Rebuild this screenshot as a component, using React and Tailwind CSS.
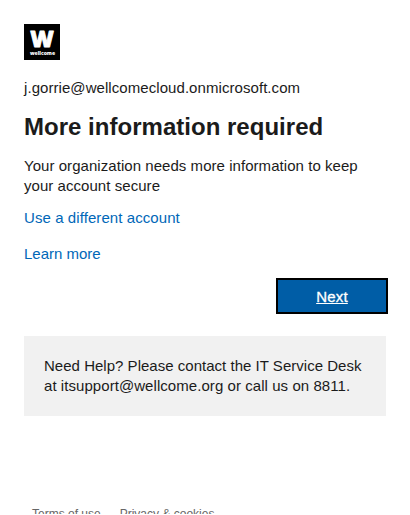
function Logo() {
  return (
    <svg className="block size-9" viewBox="0 0 36 36" role="img" aria-label="wellcome">
      <rect width="36" height="36" fill="#000" />
      <text x="6.2" y="23" fontFamily="'Open Sans', sans-serif" fontSize="23" fontWeight="800" fill="#fff" stroke="#fff" strokeWidth="0.9" strokeLinejoin="round" textLength="23.6" lengthAdjust="spacingAndGlyphs">W</text>
      <text x="6" y="31" fontFamily="'Open Sans', sans-serif" fontSize="5" fontWeight="800" fill="#fff" textLength="25" lengthAdjust="spacingAndGlyphs">wellcome</text>
    </svg>
  );
}

export default function App() {
  return (
    <div className="h-[515px] overflow-hidden bg-white font-['Liberation_Sans',Arial,sans-serif] text-[15px] leading-5 text-[#1b1b1b]">
      <div className="flex h-[514px] flex-col overflow-hidden pl-6">
        <main className="flex h-[482px] shrink-0 flex-col pt-6">
          <Logo />
          <p className="mt-[18px] whitespace-nowrap tracking-[0.065px]">j.gorrie@wellcomecloud.onmicrosoft.com</p>
          <h1 className="mt-[15px] whitespace-nowrap text-2xl leading-7 font-bold tracking-[0.02px]">More information required</h1>
          <p className="mt-[15px] whitespace-nowrap tracking-[0.05px]">
            Your organization needs more information to keep
            <br />
            your account secure
          </p>
          <a href="#" className="mt-3 self-start whitespace-nowrap tracking-[0.08px] text-[#0067b8]">Use a different account</a>
          <a href="#" className="mt-4 self-start whitespace-nowrap text-[#0067b8]">Learn more</a>
          <button className="mt-[14px] mr-[22px] h-9 w-28 self-end border-2 border-black bg-[#005da6] pt-0.5 tracking-[0.2px] text-white underline [-webkit-text-stroke:0.3px_#fff]">Next</button>
          <div className="mt-[22px] h-20 w-[362px] bg-[#f1f1f1] p-5 whitespace-nowrap">
            <span className="tracking-[0.02px]">Need Help? Please contact the IT Service Desk</span>
            <br />
            <span className="tracking-[0.06px]">at itsupport@wellcome.org or call us on 8811.</span>
          </div>
        </main>
        <footer className="flex shrink-0 gap-[19px] pt-[18px] pl-2 text-xs leading-7 text-[#666]">
          <a href="#">Terms of use</a>
          <a href="#">Privacy &amp; cookies</a>
        </footer>
      </div>
    </div>
  );
}
